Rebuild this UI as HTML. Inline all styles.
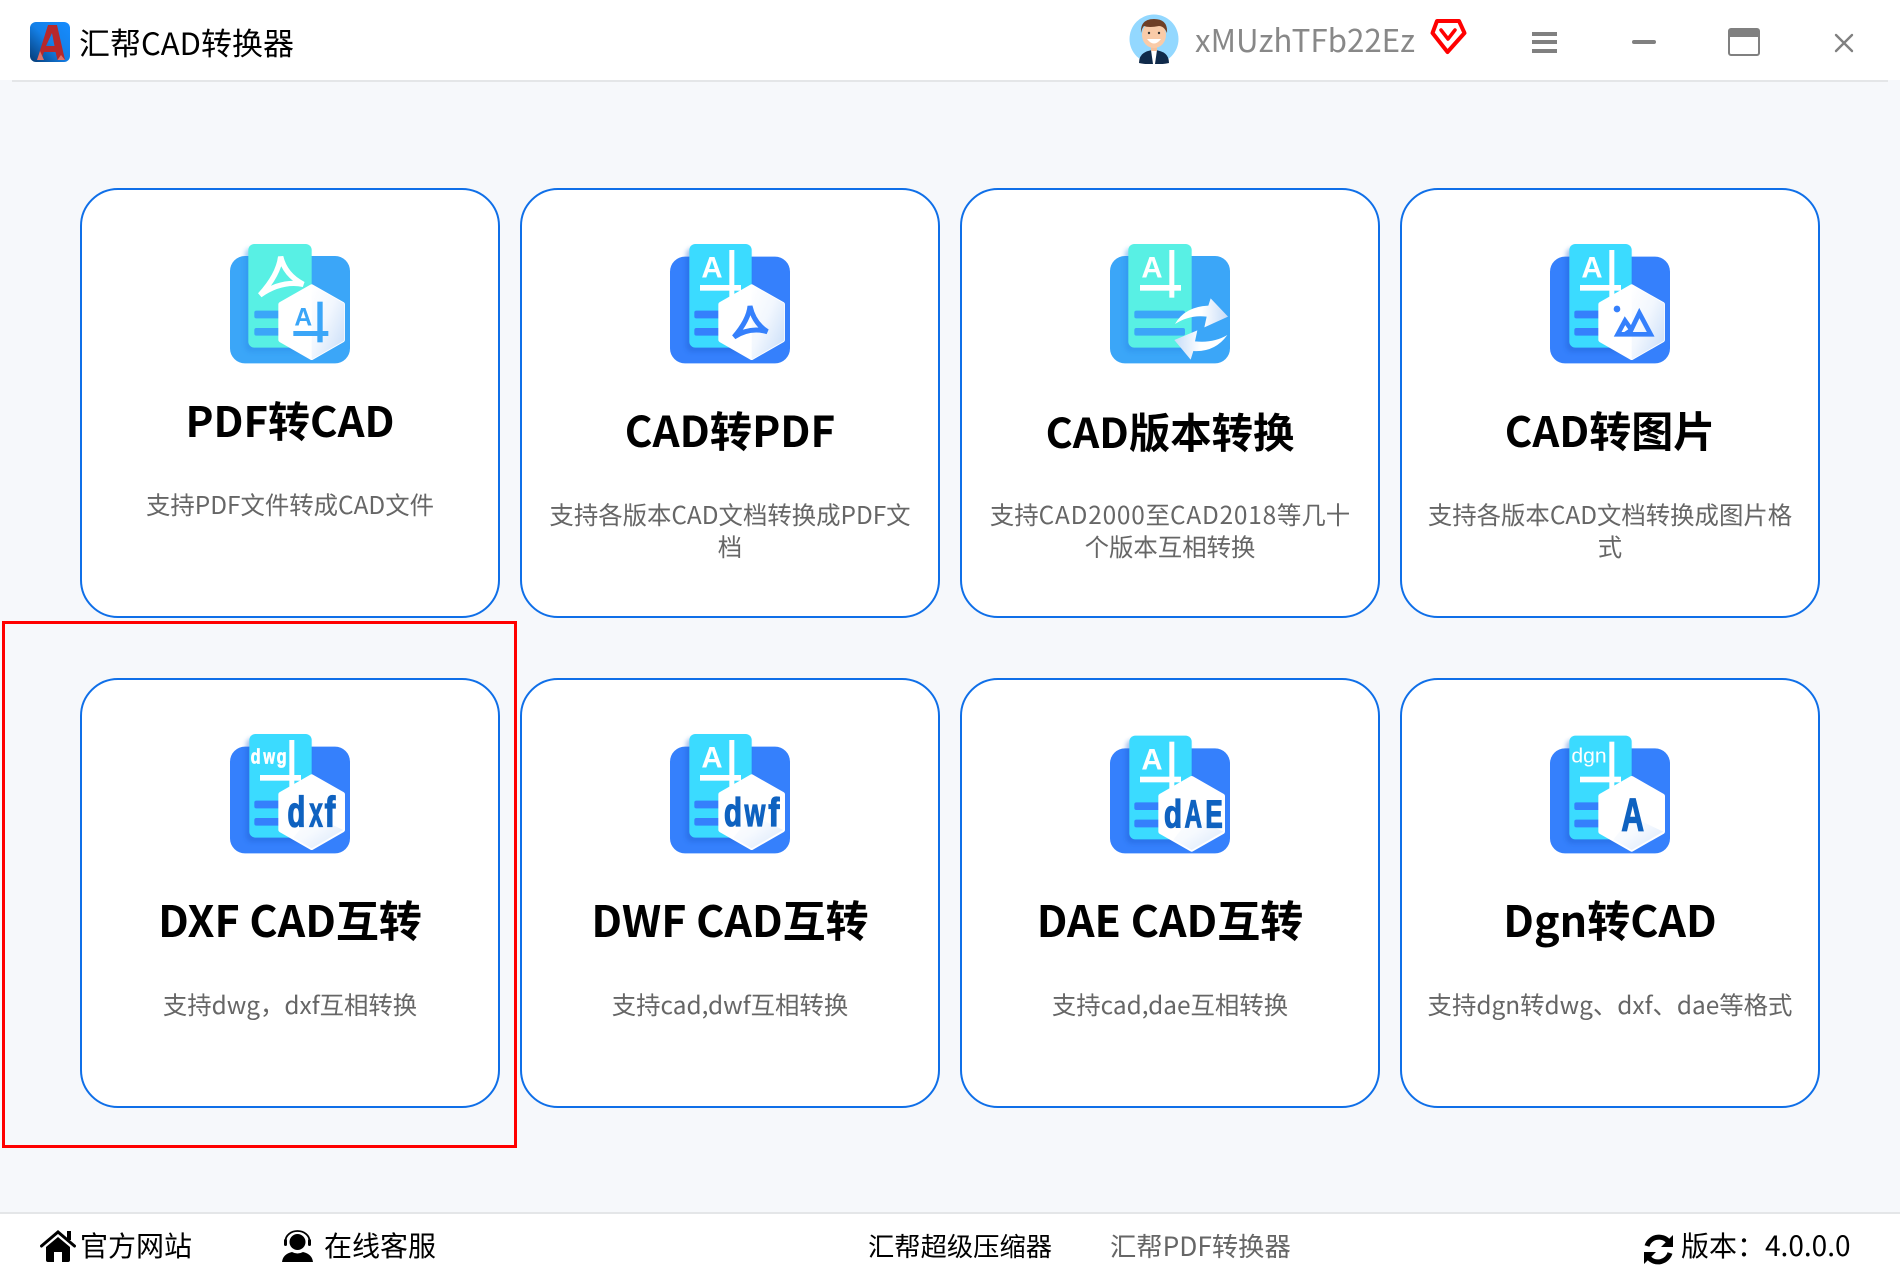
<!DOCTYPE html>
<html lang="zh">
<head>
<meta charset="utf-8">
<title>汇帮CAD转换器</title>
<style>
html,body{margin:0;padding:0;width:1900px;height:1280px;overflow:hidden;background:#f6f8fb;font-family:"Noto Sans CJK SC","Liberation Sans",sans-serif;}
.abs{position:absolute;white-space:nowrap;}
#head{position:absolute;left:0;top:0;width:1900px;height:80px;background:#fff;}
#hl{position:absolute;left:12px;top:80px;width:1876px;height:2px;background:#e4e6e8;}
#foot{position:absolute;left:0;top:1212px;width:1900px;height:68px;background:#fff;border-top:2px solid #e4e6e8;box-sizing:border-box;}
.card{position:absolute;width:420px;height:430px;box-sizing:border-box;border:2px solid #0f6fe8;border-radius:38px;background:#fff;}
.t{position:absolute;left:-2px;width:420px;height:60px;line-height:60px;text-align:center;font-size:43px;font-weight:700;color:#000;white-space:nowrap;}
.d{position:absolute;left:-2px;width:420px;line-height:32px;text-align:center;font-size:24.4px;color:#666;}
.ic{position:absolute;width:160px;height:150px;}
#red{position:absolute;left:2px;top:621px;width:515px;height:527px;box-sizing:border-box;border:3px solid #f00;}
.f{font-size:28px;line-height:40px;color:#000;}
.ls{letter-spacing:.8px;}
</style>
</head>
<body>
<svg width="0" height="0" style="position:absolute">
<defs>
<linearGradient id="hg" x1="0" y1="0" x2="1" y2="1"><stop offset="0" stop-color="#fff"/><stop offset=".45" stop-color="#f2f7fe"/><stop offset="1" stop-color="#c6dcf8"/></linearGradient>
<linearGradient id="ag" x1="0" y1="0" x2="1" y2="0"><stop offset="0" stop-color="#fff"/><stop offset=".5" stop-color="#fff"/><stop offset="1" stop-color="#c6dcf8"/></linearGradient>
<linearGradient id="ag2" x1="1" y1="0" x2="0" y2="0"><stop offset="0" stop-color="#fff"/><stop offset=".5" stop-color="#fff"/><stop offset="1" stop-color="#c6dcf8"/></linearGradient>
<linearGradient id="lg" x1="1" y1="0" x2="0" y2="1"><stop offset="0" stop-color="#168cff"/><stop offset=".5" stop-color="#1480e8"/><stop offset="1" stop-color="#053a74"/></linearGradient>
<filter id="sh" x="-20%" y="-20%" width="140%" height="140%"><feGaussianBlur stdDeviation="7"/></filter>
</defs>
</svg>

<div id="head"></div><div id="hl"></div>

<svg class="abs" style="left:30px;top:22px" width="40" height="40" viewBox="0 0 40 40">
<rect width="40" height="40" rx="6" fill="url(#lg)"/>
<path d="M7 38 L18 3 H27 L35 38 H27.500 L25.500 30 H14 L11 38Z M16 24 H24.500 L22 11Z" fill="#b8282b" fill-rule="evenodd"/>
<path d="M7 38 L10 29 L14 38Z M27.500 38 L31 33 L35 38Z" fill="#e0736a"/>
</svg>
<div class="abs" style="left:79px;top:20px;font-size:31px;line-height:44px;color:#000;">汇帮CAD转换器</div>

<svg class="abs" style="left:1129px;top:14px" width="50" height="50" viewBox="0 0 50 50">
<circle cx="25" cy="25" r="24.500" fill="#93d8ff"/>
<path d="M10 49 Q10 37 25 36 Q40 37 40 49 Q25 52 10 49Z" fill="#0f2a4a"/>
<path d="M22 36 H28 L26 50 H24Z" fill="#fff"/>
<rect x="22" y="28" width="6" height="9" fill="#f5c09b"/>
<ellipse cx="25" cy="21" rx="12" ry="13" fill="#f9cba8"/>
<path d="M12 19 Q11 5 25 5 Q39 5 38 19 Q35 12 30 12 Q20 14 15 12 Q13 14 12 19Z" fill="#6e3f26"/>
<path d="M18 25 Q25 34 32 25Z" fill="#fff"/>
<circle cx="20" cy="19" r="1.200" fill="#333"/><circle cx="30" cy="19" r="1.200" fill="#333"/>
</svg>
<div class="abs" style="left:1195px;top:17px;font-size:31.300px;line-height:46px;color:#888;">xMUzhTFb22Ez</div>
<svg class="abs" style="left:1429px;top:17px" width="40" height="40" viewBox="1430 17 40 40">
<path d="M1438 21 H1460 L1465.500 33 L1448.500 52 L1433.500 33Z" fill="none" stroke="#f00" stroke-width="4" stroke-linejoin="round"/>
<path d="M1442 30 L1449 39 L1456 30" fill="none" stroke="#f00" stroke-width="3.500" stroke-linecap="round" stroke-linejoin="round"/>
</svg>
<div class="abs" style="left:1532px;top:32px;width:25px;height:3.500px;background:#808080"></div>
<div class="abs" style="left:1532px;top:40px;width:25px;height:3.500px;background:#808080"></div>
<div class="abs" style="left:1532px;top:49px;width:25px;height:3.500px;background:#808080"></div>
<div class="abs" style="left:1632px;top:40px;width:24px;height:4px;border-radius:2px;background:#808080"></div>
<div class="abs" style="left:1728px;top:28px;width:32px;height:28px;box-sizing:border-box;border:2.500px solid #808080;border-top:9px solid #808080;border-radius:3px;"></div>
<svg class="abs" style="left:1834px;top:33px" width="20" height="20" viewBox="0 0 20 20"><path d="M2 2 L18 18 M18 2 L2 18" stroke="#808080" stroke-width="2.400" stroke-linecap="round"/></svg>

<!-- Row 1 -->
<div class="card" style="left:80px;top:188px">
<div class="t" style="top:200px;font-size:42px">PDF转CAD</div>
<div class="d" style="top:299px">支持PDF文件转成CAD文件</div>
</div>
<div class="card" style="left:520px;top:188px">
<div class="t" style="top:210px;font-size:42.300px">CAD转PDF</div>
<div class="d" style="top:309px">支持各版本CAD文档转换成PDF文<br>档</div>
</div>
<div class="card" style="left:960px;top:188px">
<div class="t" style="top:210px;font-size:41.400px">CAD版本转换</div>
<div class="d" style="top:309px">支持<span class="ls">CAD2000</span>至<span class="ls">CAD2018</span>等几十<br>个版本互相转换</div>
</div>
<div class="card" style="left:1400px;top:188px">
<div class="t" style="top:210px;font-size:42px">CAD转图片</div>
<div class="d" style="top:309px">支持各版本CAD文档转换成图片格<br>式</div>
</div>
<!-- Row 2 -->
<div class="card" style="left:80px;top:678px">
<div class="t" style="top:209px">DXF CAD互转</div>
<div class="d" style="top:309px">支持dwg，dxf互相转换</div>
</div>
<div class="card" style="left:520px;top:678px">
<div class="t" style="top:209px">DWF CAD互转</div>
<div class="d" style="top:309px">支持cad,dwf互相转换</div>
</div>
<div class="card" style="left:960px;top:678px">
<div class="t" style="top:209px">DAE CAD互转</div>
<div class="d" style="top:309px">支持cad,dae互相转换</div>
</div>
<div class="card" style="left:1400px;top:678px">
<div class="t" style="top:209px">Dgn转CAD</div>
<div class="d" style="top:309px">支持dgn转dwg、dxf、dae等格式</div>
</div>

<!-- Icon 1 PDF->CAD -->
<svg class="ic" style="left:210px;top:225px" viewBox="0 0 480 450">
<rect x="60" y="93" width="360" height="322" rx="45" fill="#3ba6f8"/>
<rect x="105" y="70" width="190" height="311" rx="18" fill="#2a8ce8" opacity=".45" filter="url(#sh)"/>
<rect x="115" y="57" width="190" height="311" rx="18" fill="#58f0e4"/>
<path d="M212 95 Q205 150 150 210 Q215 165 280 178 Q225 150 212 95Z" fill="none" stroke="#fff" stroke-width="16" stroke-linejoin="miter"/>
<rect x="133" y="257" width="100" height="23" rx="6" fill="#3ba6f8"/><rect x="133" y="309" width="100" height="23" rx="6" fill="#3ba6f8"/>
<path d="M305 185 L398 238 V345 L305 398 L212 345 V238Z" fill="#fff" stroke="#fff" stroke-width="14" stroke-linejoin="round"/>
<path d="M305 180 L403 236 V347 L305 403Z" fill="url(#hg)"/>
<text x="280" y="302" text-anchor="middle" font-family="Liberation Sans" font-weight="700" font-size="74" fill="#3ba6f8">A</text>
<rect x="322" y="230" width="16" height="122" fill="#3ba6f8"/><rect x="250" y="318" width="105" height="15" fill="#3ba6f8"/>
</svg>

<!-- Icon 2 CAD->PDF -->
<svg class="ic" style="left:650px;top:225px" viewBox="0 0 480 450">
<rect x="60" y="95" width="360" height="320" rx="45" fill="#3580fc"/>
<rect x="108" y="70" width="190" height="311" rx="18" fill="#1a5fd0" opacity=".4" filter="url(#sh)"/>
<rect x="118" y="57" width="187" height="311" rx="18" fill="#3bdbff"/>
<text x="186" y="158" text-anchor="middle" font-family="Liberation Sans" font-weight="700" font-size="88" fill="#fff">A</text>
<rect x="238" y="75" width="15" height="143" fill="#fff"/><rect x="150" y="180" width="123" height="17" fill="#fff"/>
<rect x="133" y="257" width="100" height="23" rx="6" fill="#3580fc"/><rect x="133" y="309" width="100" height="23" rx="6" fill="#3580fc"/>
<path d="M305 185 L398 238 V345 L305 398 L212 345 V238Z" fill="#fff" stroke="#fff" stroke-width="14" stroke-linejoin="round"/>
<path d="M305 180 L403 236 V347 L305 403Z" fill="url(#hg)"/>
<path d="M300 243 Q296 285 252 336 Q300 305 352 320 Q312 295 300 243Z" fill="none" stroke="#3580fc" stroke-width="15"/>
</svg>

<!-- Icon 3 version -->
<svg class="ic" style="left:1090px;top:225px" viewBox="0 0 480 450">
<rect x="60" y="93" width="360" height="322" rx="45" fill="#3ba6f8"/>
<rect x="105" y="70" width="190" height="311" rx="18" fill="#2a8ce8" opacity=".45" filter="url(#sh)"/>
<rect x="115" y="57" width="190" height="311" rx="18" fill="#58f0e4"/>
<text x="186" y="158" text-anchor="middle" font-family="Liberation Sans" font-weight="700" font-size="88" fill="#fff">A</text>
<rect x="238" y="75" width="15" height="143" fill="#fff"/><rect x="150" y="180" width="123" height="17" fill="#fff"/>
<rect x="133" y="257" width="152" height="23" rx="6" fill="#3ba6f8"/><rect x="133" y="309" width="152" height="23" rx="6" fill="#3ba6f8"/>
<path d="M255 297 Q285 245 355 242 L362 220 L414 275 L343 307 L350 275 Q300 268 255 297Z" fill="url(#ag)"/>
<path d="M412 330 Q375 382 310 378 L302 404 L253 345 L322 316 L315 349 Q370 355 412 330Z" fill="url(#ag2)"/>
</svg>

<!-- Icon 4 image -->
<svg class="ic" style="left:1530px;top:225px" viewBox="0 0 480 450">
<rect x="60" y="95" width="360" height="320" rx="45" fill="#3580fc"/>
<rect x="108" y="70" width="190" height="311" rx="18" fill="#1a5fd0" opacity=".4" filter="url(#sh)"/>
<rect x="118" y="57" width="187" height="311" rx="18" fill="#3bdbff"/>
<text x="186" y="158" text-anchor="middle" font-family="Liberation Sans" font-weight="700" font-size="88" fill="#fff">A</text>
<rect x="238" y="75" width="15" height="143" fill="#fff"/><rect x="150" y="180" width="123" height="17" fill="#fff"/>
<rect x="133" y="257" width="100" height="23" rx="6" fill="#3580fc"/><rect x="133" y="309" width="100" height="23" rx="6" fill="#3580fc"/>
<path d="M305 185 L398 238 V345 L305 398 L212 345 V238Z" fill="#fff" stroke="#fff" stroke-width="14" stroke-linejoin="round"/>
<path d="M305 180 L403 236 V347 L305 403Z" fill="url(#hg)"/>
<circle cx="261" cy="252" r="10" fill="#3580fc"/>
<path d="M263 328 L285 287 L304 314 L328 264 L362 328Z M285 328 L300 318" fill="none" stroke="#3580fc" stroke-width="14" stroke-linejoin="miter"/>
</svg>

<!-- Icon 5 dxf -->
<svg class="ic" style="left:210px;top:715px" viewBox="0 0 480 450">
<rect x="60" y="95" width="360" height="320" rx="45" fill="#3580fc"/>
<rect x="108" y="70" width="190" height="311" rx="18" fill="#1a5fd0" opacity=".4" filter="url(#sh)"/>
<rect x="118" y="57" width="187" height="311" rx="18" fill="#3bdbff"/>
<g font-family="Liberation Sans" font-weight="700" font-size="60" fill="#fff" stroke="#fff" stroke-width="2">
<text x="122" y="146" textLength="30" lengthAdjust="spacingAndGlyphs">d</text>
<text x="160" y="146" textLength="35" lengthAdjust="spacingAndGlyphs">w</text>
<text x="200" y="146" textLength="30" lengthAdjust="spacingAndGlyphs">g</text>
</g>
<rect x="238" y="75" width="15" height="143" fill="#fff"/><rect x="150" y="180" width="123" height="17" fill="#fff"/>
<rect x="133" y="257" width="100" height="23" rx="6" fill="#3580fc"/><rect x="133" y="309" width="100" height="23" rx="6" fill="#3580fc"/>
<path d="M305 185 L398 238 V345 L305 398 L212 345 V238Z" fill="#fff" stroke="#fff" stroke-width="14" stroke-linejoin="round"/>
<path d="M305 300 L400 345 L305 400 L250 368Z" fill="url(#hg)" opacity=".7"/>
<g font-family="Liberation Sans" font-weight="700" font-size="128" fill="#0f62c0" stroke="#0f62c0" stroke-width="4">
<text x="232" y="334" textLength="54" lengthAdjust="spacingAndGlyphs">d</text>
<text x="298" y="334" textLength="40" lengthAdjust="spacingAndGlyphs">x</text>
<text x="344" y="334" textLength="32" lengthAdjust="spacingAndGlyphs">f</text>
</g>
</svg>

<!-- Icon 6 dwf -->
<svg class="ic" style="left:650px;top:715px" viewBox="0 0 480 450">
<rect x="60" y="95" width="360" height="320" rx="45" fill="#3580fc"/>
<rect x="108" y="70" width="190" height="311" rx="18" fill="#1a5fd0" opacity=".4" filter="url(#sh)"/>
<rect x="118" y="57" width="187" height="311" rx="18" fill="#3bdbff"/>
<text x="186" y="158" text-anchor="middle" font-family="Liberation Sans" font-weight="700" font-size="88" fill="#fff">A</text>
<rect x="238" y="75" width="15" height="143" fill="#fff"/><rect x="150" y="180" width="123" height="17" fill="#fff"/>
<rect x="133" y="257" width="100" height="23" rx="6" fill="#3580fc"/><rect x="133" y="309" width="100" height="23" rx="6" fill="#3580fc"/>
<path d="M305 185 L398 238 V345 L305 398 L212 345 V238Z" fill="#fff" stroke="#fff" stroke-width="14" stroke-linejoin="round"/>
<path d="M305 300 L400 345 L305 400 L250 368Z" fill="url(#hg)" opacity=".7"/>
<g font-family="Liberation Sans" font-weight="700" font-size="120" fill="#0f62c0" stroke="#0f62c0" stroke-width="4">
<text x="222" y="333" textLength="54" lengthAdjust="spacingAndGlyphs">d</text>
<text x="284" y="333" textLength="62" lengthAdjust="spacingAndGlyphs">w</text>
<text x="355" y="333" textLength="33" lengthAdjust="spacingAndGlyphs">f</text>
</g>
</svg>

<!-- Icon 7 dAE -->
<svg class="ic" style="left:1090px;top:715px" viewBox="0 0 480 450">
<rect x="60" y="100" width="360" height="315" rx="45" fill="#3580fc"/>
<rect x="108" y="75" width="190" height="311" rx="18" fill="#1a5fd0" opacity=".4" filter="url(#sh)"/>
<rect x="118" y="62" width="187" height="311" rx="18" fill="#3bdbff"/>
<text x="186" y="163" text-anchor="middle" font-family="Liberation Sans" font-weight="700" font-size="88" fill="#fff">A</text>
<rect x="238" y="80" width="15" height="143" fill="#fff"/><rect x="150" y="185" width="123" height="17" fill="#fff"/>
<rect x="133" y="262" width="100" height="23" rx="6" fill="#3580fc"/><rect x="133" y="314" width="100" height="23" rx="6" fill="#3580fc"/>
<path d="M305 190 L398 243 V350 L305 403 L212 350 V243Z" fill="#fff" stroke="#fff" stroke-width="14" stroke-linejoin="round"/>
<path d="M305 305 L400 350 L305 405 L250 373Z" fill="url(#hg)" opacity=".7"/>
<g font-family="Liberation Sans" font-weight="700" font-size="116" fill="#0f62c0" stroke="#0f62c0" stroke-width="4">
<text x="222" y="338" textLength="54" lengthAdjust="spacingAndGlyphs">d</text>
<text x="284" y="338" textLength="52" lengthAdjust="spacingAndGlyphs">A</text>
<text x="346" y="338" textLength="52" lengthAdjust="spacingAndGlyphs">E</text>
</g>
</svg>

<!-- Icon 8 dgn -->
<svg class="ic" style="left:1530px;top:715px" viewBox="0 0 480 450">
<rect x="60" y="100" width="360" height="315" rx="45" fill="#3580fc"/>
<rect x="108" y="75" width="190" height="311" rx="18" fill="#1a5fd0" opacity=".4" filter="url(#sh)"/>
<rect x="118" y="62" width="187" height="311" rx="18" fill="#3bdbff"/>
<text x="124" y="142" font-family="Liberation Sans" font-size="62" fill="#fff" textLength="106" lengthAdjust="spacingAndGlyphs">dgn</text>
<rect x="238" y="80" width="15" height="143" fill="#fff"/><rect x="150" y="185" width="123" height="17" fill="#fff"/>
<rect x="133" y="262" width="100" height="23" rx="6" fill="#3580fc"/><rect x="133" y="314" width="100" height="23" rx="6" fill="#3580fc"/>
<path d="M305 190 L398 243 V350 L305 403 L212 350 V243Z" fill="#fff" stroke="#fff" stroke-width="14" stroke-linejoin="round"/>
<path d="M305 305 L400 350 L305 405 L250 373Z" fill="url(#hg)" opacity=".7"/>
<text x="308" y="347" text-anchor="middle" font-family="Liberation Sans" font-weight="700" font-size="138" fill="#0f62c0" stroke="#0f62c0" stroke-width="4" textLength="68" lengthAdjust="spacingAndGlyphs">A</text>
</svg>

<div id="red"></div>

<div id="foot"></div>
<svg class="abs" style="left:40px;top:1230px" width="36" height="33" viewBox="0 0 36 33">
<path d="M1.500 16 L18 2 L34.500 16" fill="none" stroke="#000" stroke-width="3" stroke-linecap="round"/>
<rect x="27" y="1" width="4" height="9" fill="#000"/>
<path d="M6 17 L18 7 L30 17 V30 Q30 32 28 32 H22 V22 H14 V32 H8 Q6 32 6 30Z" fill="#000"/>
</svg>
<div class="abs f" style="left:80px;top:1225px">官方网站</div>
<svg class="abs" style="left:282px;top:1230px" width="31" height="33" viewBox="0 0 31 33">
<circle cx="15.500" cy="12" r="8" fill="#000"/>
<path d="M3.500 13 V11 A12 10 0 0 1 27.500 11 V13" fill="none" stroke="#000" stroke-width="1.800"/>
<rect x="2" y="9" width="3" height="7" rx="1.500" fill="#000"/><rect x="26" y="9" width="3" height="7" rx="1.500" fill="#000"/>
<path d="M0 32 Q1 24 10 22 Q15.500 25 21 22 Q30 24 31 32Z" fill="#000"/>
</svg>
<div class="abs f" style="left:324px;top:1225px">在线客服</div>
<div class="abs" style="left:868px;top:1225px;font-size:26.300px;line-height:40px;color:#000;">汇帮超级压缩器</div>
<div class="abs" style="left:1110px;top:1225px;font-size:26.300px;line-height:40px;color:#666;">汇帮PDF转换器</div>
<svg class="abs" style="left:1642px;top:1233px" width="33" height="33" viewBox="0 0 33 33">
<path d="M5 13 A12.500 12.500 0 0 1 26 8" fill="none" stroke="#000" stroke-width="5"/>
<path d="M31 2 V14 H19Z" fill="#000"/>
<path d="M28 20 A12.500 12.500 0 0 1 7 25" fill="none" stroke="#000" stroke-width="5"/>
<path d="M2 31 V19 H14Z" fill="#000"/>
</svg>
<div class="abs f" style="left:1681px;top:1225px;">版本：</div>
<div class="abs f" style="left:1765px;top:1225px;">4.0.0.0</div>
</body>
</html>
